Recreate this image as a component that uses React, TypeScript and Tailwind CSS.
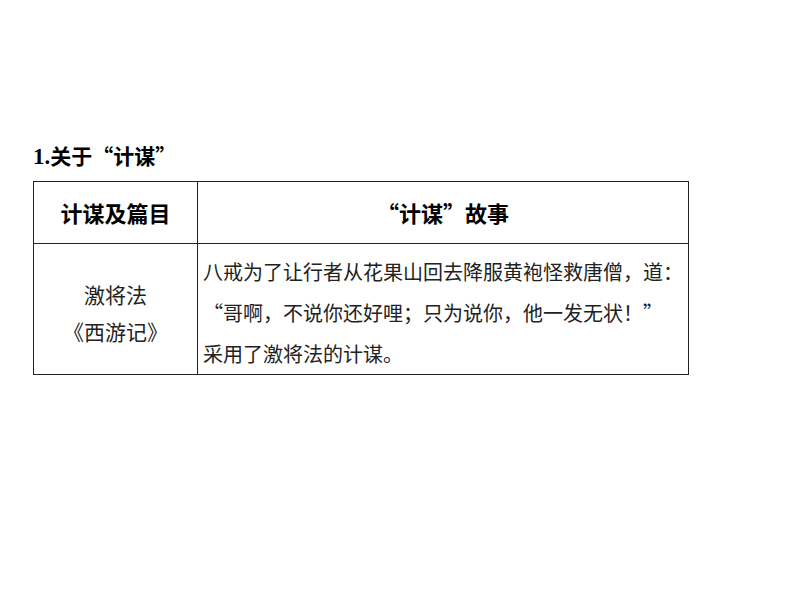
import React from 'react';

const cjk = { fontFamily: '"Noto Sans CJK SC", "Liberation Sans", sans-serif' };

const App: React.FC = () => {
  return (
    <div className="w-[794px] h-[596px] bg-white text-black" style={cjk}>
      <div className="pl-[33px] pt-[141px]">
        {/* 标题 */}
        <h2 className="text-[21px] leading-[28px] font-bold flex items-baseline">
          <span className="font-['Liberation_Serif'] text-[23px]">1.</span>
          <span>关于“计谋”</span>
        </h2>

        <table className="mt-[10px] w-[656px] border-collapse border border-[#222] table-fixed">
          <colgroup>
            <col className="w-[164px]" />
            <col />
          </colgroup>
          <thead>
            <tr className="h-[62px]">
              <th className="border border-[#222] p-0 text-[22px] font-bold text-center">计谋及篇目</th>
              <th className="border border-[#222] p-0 text-[22px] font-bold text-center">“计谋”故事</th>
            </tr>
          </thead>
          <tbody>
            <tr className="h-[131px]">
              <td className="border border-[#222] p-0 pt-[8px] text-center text-[21px] leading-[37px] text-[#222]">
                <div>激将法</div>
                <div>《西游记》</div>
              </td>
              <td className="border border-[#222] p-0 px-[5px] pt-[7px] text-[20px] leading-[41px] text-[#222] align-middle">
                <div className="whitespace-nowrap">八戒为了让行者从花果山回去降服黄袍怪救唐僧，道：</div>
                <div className="whitespace-nowrap">“哥啊，不说你还好哩；只为说你，他一发无状！”</div>
                <div className="whitespace-nowrap">采用了激将法的计谋。</div>
              </td>
            </tr>
          </tbody>
        </table>
      </div>
    </div>
  );
};

export default App;
